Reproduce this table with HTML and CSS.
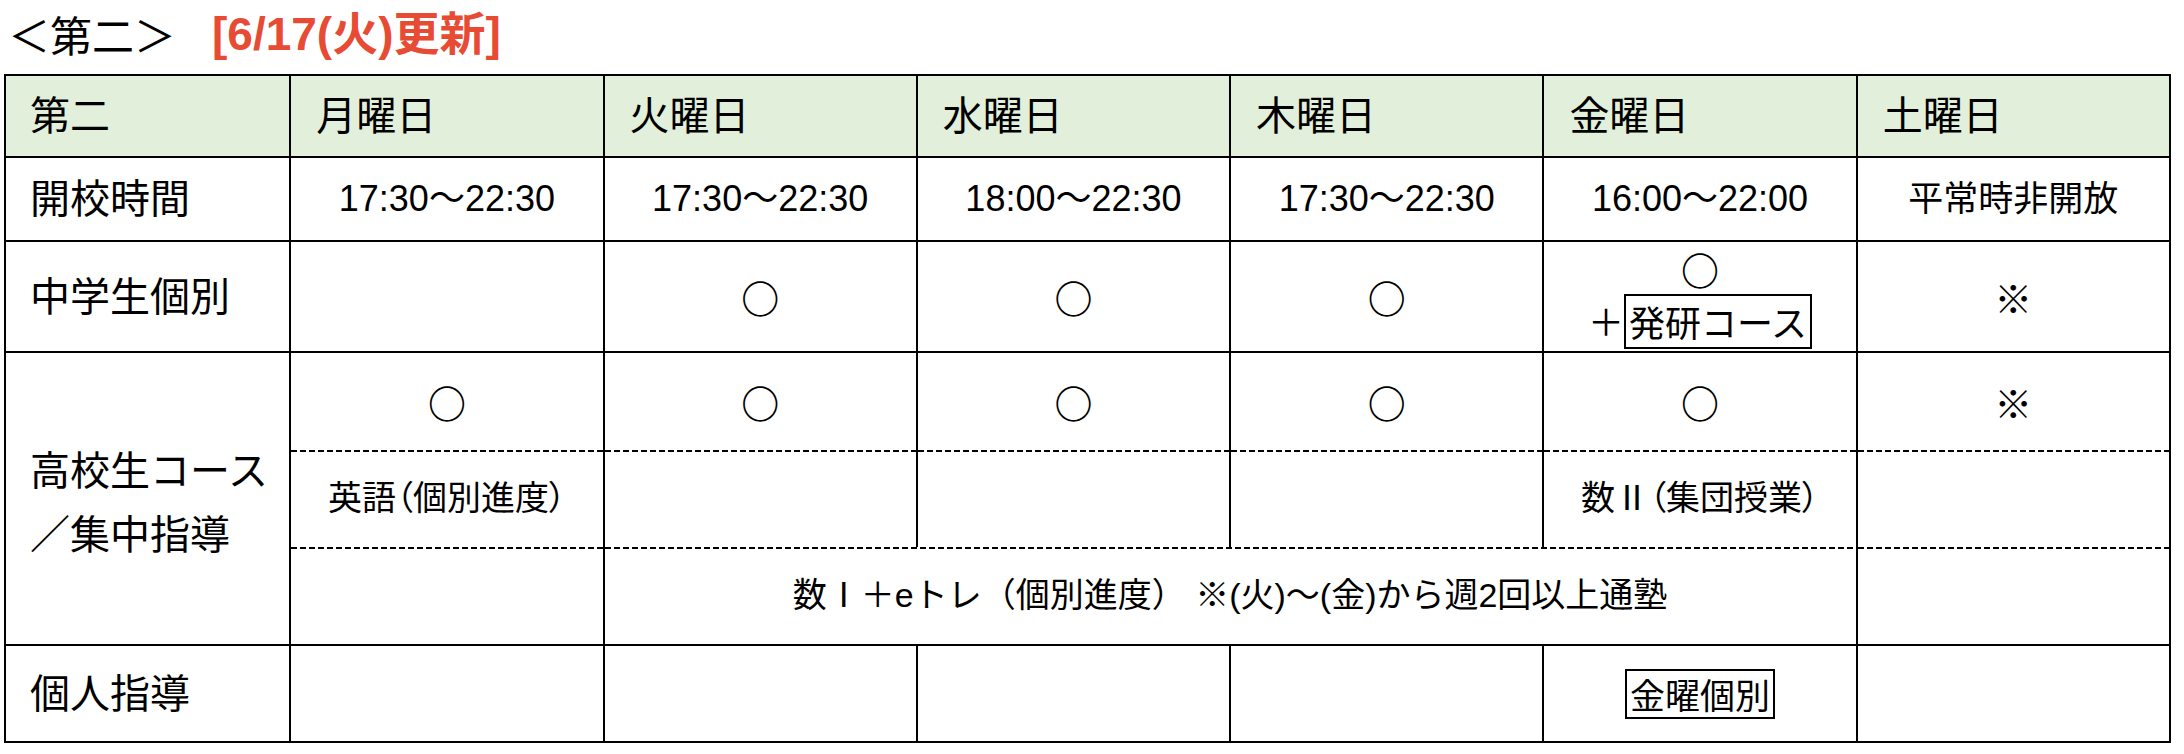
FILE: index.html
```html
<!DOCTYPE html>
<html lang="ja">
<head>
<meta charset="utf-8">
<title>第二 時間割</title>
<link rel="stylesheet" href="styles.css">
</head>
<body>
<div class="title">
  <span class="t-main">＜第二＞</span>
  <span class="t-upd">[6/17(火)更新]</span>
</div>
<table class="sched">
  <colgroup>
    <col class="c-label">
    <col class="c-day"><col class="c-day"><col class="c-day">
    <col class="c-day"><col class="c-day"><col class="c-day">
  </colgroup>
  <thead>
    <tr class="r-head">
      <th class="lbl">第二</th>
      <th>月曜日</th>
      <th>火曜日</th>
      <th>水曜日</th>
      <th>木曜日</th>
      <th>金曜日</th>
      <th>土曜日</th>
    </tr>
  </thead>
  <tbody>
    <tr class="r-open">
      <td class="lbl">開校時間</td>
      <td class="time">17:30～22:30</td>
      <td class="time">17:30～22:30</td>
      <td class="time">18:00～22:30</td>
      <td class="time">17:30～22:30</td>
      <td class="time">16:00～22:00</td>
      <td class="note">平常時非開放</td>
    </tr>
    <tr class="r-jhs">
      <td class="lbl">中学生個別</td>
      <td></td>
      <td class="mark circle">○</td>
      <td class="mark circle">○</td>
      <td class="mark circle">○</td>
      <td class="combo">
        <div class="combo-mark">○</div>
        <div class="combo-line"><span class="plus">＋</span><span class="boxed boxed-lg">発研コース</span></div>
      </td>
      <td class="mark">※</td>
    </tr>
    <tr class="r-hs1">
      <td class="lbl lbl-hs" rowspan="3">高校生コース<br>／集中指導</td>
      <td class="mark circle">○</td>
      <td class="mark circle">○</td>
      <td class="mark circle">○</td>
      <td class="mark circle">○</td>
      <td class="mark circle">○</td>
      <td class="mark">※</td>
    </tr>
    <tr class="r-hs2">
      <td class="sub palt">英語（個別進度）</td>
      <td></td>
      <td></td>
      <td></td>
      <td class="sub palt">数Ⅱ（集団授業）</td>
      <td></td>
    </tr>
    <tr class="r-hs3">
      <td></td>
      <td class="sub" colspan="4">数Ⅰ＋eトレ（個別進度） ※(火)～(金)から週2回以上通塾</td>
      <td></td>
    </tr>
    <tr class="r-ind">
      <td class="lbl">個人指導</td>
      <td></td>
      <td></td>
      <td></td>
      <td></td>
      <td class="boxcell"><span class="boxed">金曜個別</span></td>
      <td></td>
    </tr>
  </tbody>
</table>
</body>
</html>
```

FILE: styles.css
```css
html, body {
  margin: 0;
  padding: 0;
  background: #ffffff;
}

body {
  padding-left: 4px;
  font-family: "Liberation Sans", "Noto Sans CJK JP", sans-serif;
  color: #000;
}

.title {
  height: 74px;
  display: flex;
  align-items: center;
  padding-left: 4px;
  padding-bottom: 7px;
  box-sizing: border-box;
}

.t-main {
  font-family: "Noto Sans CJK JP", sans-serif;
  font-size: 42px;
  line-height: 1;
}

.t-upd {
  margin-left: 36px;
  font-size: 46px;
  line-height: 1;
  font-weight: bold;
  color: #e84b34;
}

.sched {
  border-collapse: collapse;
  table-layout: fixed;
  width: 2167px;
}

.c-label { width: 285px; }
.c-day { width: 313px; }

.sched th,
.sched td {
  border: 2px solid #000;
  padding: 0;
  text-align: center;
  vertical-align: middle;
  font-weight: normal;
  font-size: 34px;
  line-height: 1.2;
}

.r-head th {
  background: #e2efda;
  text-align: left;
  padding-left: 25px;
  font-size: 40px;
}

.sched .lbl {
  text-align: left;
  padding-left: 24px;
  font-size: 40px;
}

.r-head { height: 82px; }
.r-open { height: 84px; }
.r-jhs { height: 111px; }
.r-hs1 { height: 98px; }
.r-hs2 { height: 97px; }
.r-hs3 { height: 98px; }
.r-ind { height: 97px; }

.sched .time { font-size: 36px; }
.sched .note { font-size: 35px; }
.sched .mark {
  font-family: "Noto Sans CJK JP", sans-serif;
  font-size: 38px;
}
.sched .circle,
.combo-mark {
  font-weight: bold;
}

.palt { font-feature-settings: "palt"; }

.sched .lbl-hs {
  line-height: 64px;
  padding-top: 8px;
}

/* dashed separators inside the high school block */
.r-hs1 td:not(.lbl) { border-bottom: none; }
.r-hs2 td { border-top: none; border-bottom: none; }
.r-hs3 td { border-top: none; }
.r-hs2 td,
.r-hs3 td {
  background-image: repeating-linear-gradient(to right, #000 0 6px, transparent 6px 9px);
  background-size: 100% 2px;
  background-repeat: no-repeat;
  background-position: 0 0;
}

.combo {
  vertical-align: bottom;
}
.combo-mark {
  font-family: "Noto Sans CJK JP", sans-serif;
  font-size: 38px;
  line-height: 50px;
}
.combo-line {
  display: flex;
  justify-content: center;
  align-items: flex-end;
  font-size: 36px;
}
.plus {
  line-height: 50px;
}

.boxed {
  display: inline-block;
  border: 2px solid #000;
  padding: 0 3px;
  font-family: "Noto Sans CJK JP", sans-serif;
  font-size: 35px;
  line-height: 46px;
}
.boxed-lg {
  font-size: 36px;
  line-height: 51px;
}
```
